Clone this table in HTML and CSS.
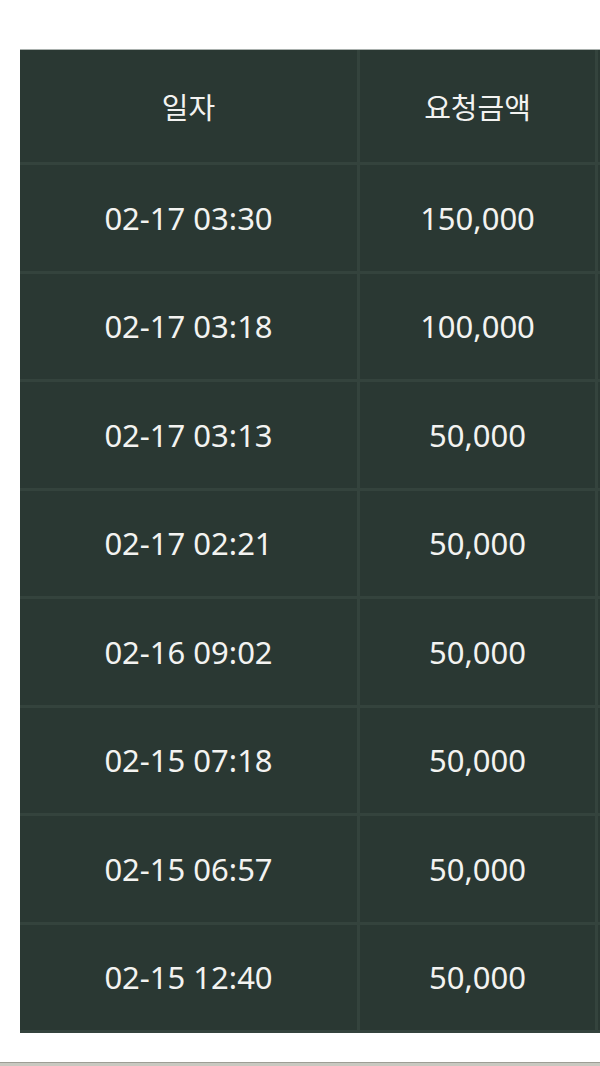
FILE: index.html
```html
<!DOCTYPE html>
<html lang="ko">

<head>
    <meta charset="UTF-8">
    <meta name="viewport" content="width=device-width, initial-scale=1.0">
    <title>출금내역</title>
    <link rel="stylesheet" href="styles.css">
</head>

<body>
    <div class="page">
        <div class="list-wrap">
            <table class="list">
                <colgroup>
                    <col class="col-date">
                    <col class="col-amount">
                    <col class="col-state">
                </colgroup>
                <thead>
                    <tr>
                        <th>일자</th>
                        <th>요청금액</th>
                        <th></th>
                    </tr>
                </thead>
                <tbody>
                    <tr><td>02-17 03:30</td><td>150,000</td><td></td></tr>
                    <tr><td>02-17 03:18</td><td>100,000</td><td></td></tr>
                    <tr><td>02-17 03:13</td><td>50,000</td><td></td></tr>
                    <tr><td>02-17 02:21</td><td>50,000</td><td></td></tr>
                    <tr><td>02-16 09:02</td><td>50,000</td><td></td></tr>
                    <tr><td>02-15 07:18</td><td>50,000</td><td></td></tr>
                    <tr><td>02-15 06:57</td><td>50,000</td><td></td></tr>
                    <tr><td>02-15 12:40</td><td>50,000</td><td></td></tr>
                </tbody>
            </table>
        </div>
        <div class="bottom-line"></div>
    </div>
</body>

</html>
```

FILE: styles.css
```css
* {
    margin: 0;
    padding: 0;
    box-sizing: border-box;
}

body {
    width: 600px;
    height: 1066px;
    overflow: hidden;
    background-color: #fff;
    font-family: "Noto Sans", "Noto Sans CJK KR", sans-serif;
}

.page {
    display: flex;
    flex-direction: column;
    height: 100%;
}

.list-wrap {
    flex: 1;
    padding: 50px 0 0 20px;
    overflow: hidden;
}

.list {
    width: 818px;
    table-layout: fixed;
    border-collapse: separate;
    border-spacing: 0;
    background-color: #2a3833;
    box-shadow: 0 -1px 0 #a9b0ad;
}

.col-date {
    width: 340px;
}

.col-amount {
    width: 238px;
}

.col-state {
    width: 240px;
}

.list th,
.list td {
    border-right: 3px solid #34433d;
    border-bottom: 3px solid #34433d;
    color: #f3f3f1;
    font-weight: normal;
    text-align: center;
    vertical-align: middle;
}

.list th {
    height: 115px;
    font-size: 29px;
}

.list td {
    height: 108.5px;
    font-size: 31px;
}

.bottom-line {
    height: 4px;
    border-top: 1px solid #9d9d95;
    background-color: #c8c8c0;
}
```
